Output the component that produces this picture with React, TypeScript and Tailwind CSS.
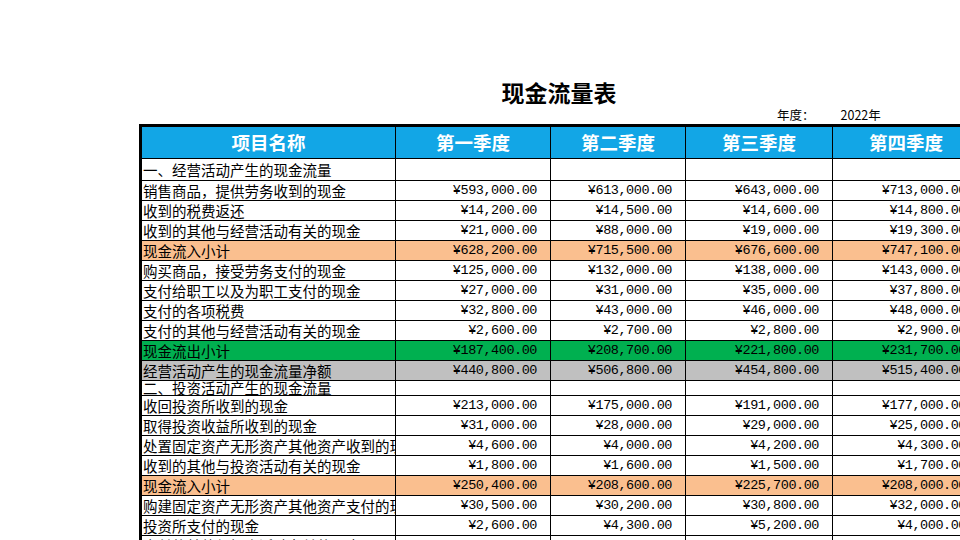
// Cash flow sheet, drawn like an Excel print area (cut at the right edge of the window)

type Row = {
  label: string;
  vals?: number[];
  tone?: "orange" | "green" | "gray";
  h?: string;
};

const rows: Row[] = [
  { label: "一、经营活动产生的现金流量", h: "h-[22px]" },
  { label: "销售商品，提供劳务收到的现金", vals: [593000, 613000, 643000, 713000] },
  { label: "收到的税费返还", vals: [14200, 14500, 14600, 14800] },
  { label: "收到的其他与经营活动有关的现金", vals: [21000, 88000, 19000, 19300] },
  { label: "现金流入小计", vals: [628200, 715500, 676600, 747100], tone: "orange" },
  { label: "购买商品，接受劳务支付的现金", vals: [125000, 132000, 138000, 143000] },
  { label: "支付给职工以及为职工支付的现金", vals: [27000, 31000, 35000, 37800] },
  { label: "支付的各项税费", vals: [32800, 43000, 46000, 48000] },
  { label: "支付的其他与经营活动有关的现金", vals: [2600, 2700, 2800, 2900] },
  { label: "现金流出小计", vals: [187400, 208700, 221800, 231700], tone: "green" },
  { label: "经营活动产生的现金流量净额", vals: [440800, 506800, 454800, 515400], tone: "gray" },
  { label: "二、投资活动产生的现金流量", h: "h-[15px]" },
  { label: "收回投资所收到的现金", vals: [213000, 175000, 191000, 177000] },
  { label: "取得投资收益所收到的现金", vals: [31000, 28000, 29000, 25000] },
  { label: "处置固定资产无形资产其他资产收到的现金", vals: [4600, 4000, 4200, 4300] },
  { label: "收到的其他与投资活动有关的现金", vals: [1800, 1600, 1500, 1700] },
  { label: "现金流入小计", vals: [250400, 208600, 225700, 208000], tone: "orange" },
  { label: "购建固定资产无形资产其他资产支付的现金", vals: [30500, 30200, 30800, 32000] },
  { label: "投资所支付的现金", vals: [2600, 4300, 5200, 4000] },
  { label: "支付的其他与投资活动有关的现金", vals: [1200, 1500, 1300, 1600] },
];

const toneBg = {
  orange: "bg-[#fabf8f]",
  green: "bg-[#00b050]",
  gray: "bg-[#c0c0c0]",
};

// quarter columns: width includes the 1px right border
const qCols = ["w-[155px]", "w-[135px]", "w-[147px]", "w-[147px]"];
const quarters = ["第一季度", "第二季度", "第三季度", "第四季度"];

function money(n: number) {
  return "¥" + n.toLocaleString("en-US", { minimumFractionDigits: 2, maximumFractionDigits: 2 });
}

export default function App() {
  return (
    <div className="w-[960px] h-[540px] overflow-hidden bg-white text-black font-['Noto_Sans_CJK_SC',sans-serif]">
      <div className="h-[78px]" />

      {/* Title */}
      <div className="ml-[139px] w-[840px] h-[28px] flex items-center justify-center text-[23px] font-bold">
        现金流量表
      </div>

      {/* Year */}
      <div className="h-[18px] flex items-center pl-[777px] text-[12.5px]">
        <span>年度：</span>
        <span className="ml-[26px]">2022年</span>
      </div>

      {/* Table */}
      <div className="ml-[139px] w-[850px] border-t-[3px] border-l-[3px] border-black">
        {/* Header */}
        <div className="flex h-[32px] border-b border-black bg-[#12a6e6] text-white text-[18.5px] font-bold">
          <div className="w-[254px] shrink-0 border-r border-black flex items-center justify-center">
            项目名称
          </div>
          {quarters.map((q, i) => (
            <div
              key={q}
              className={`${qCols[i]} shrink-0 border-r border-black flex items-center justify-center`}
            >
              {q}
            </div>
          ))}
        </div>

        {rows.map((r, idx) => (
          <div
            key={idx}
            className={`flex ${r.h ?? "h-[20px]"} border-b border-black overflow-hidden ${
              r.tone ? toneBg[r.tone] : ""
            }`}
          >
            <div
              className={`w-[254px] shrink-0 border-r border-black overflow-hidden whitespace-nowrap pl-px text-[14.5px] flex ${
                r.h === "h-[15px]" ? "items-end leading-[15px]" : "items-center leading-[19px] pb-px"
              }`}
            >
              {r.label}
            </div>
            {qCols.map((w, i) => (
              <div
                key={i}
                className={`${w} shrink-0 border-r border-black flex items-center justify-end pr-[13px] pt-[2px] whitespace-nowrap font-['Liberation_Mono',monospace] text-[13.5px] tracking-[-0.45px]`}
              >
                {r.vals ? money(r.vals[i]) : ""}
              </div>
            ))}
          </div>
        ))}
      </div>
    </div>
  );
}
